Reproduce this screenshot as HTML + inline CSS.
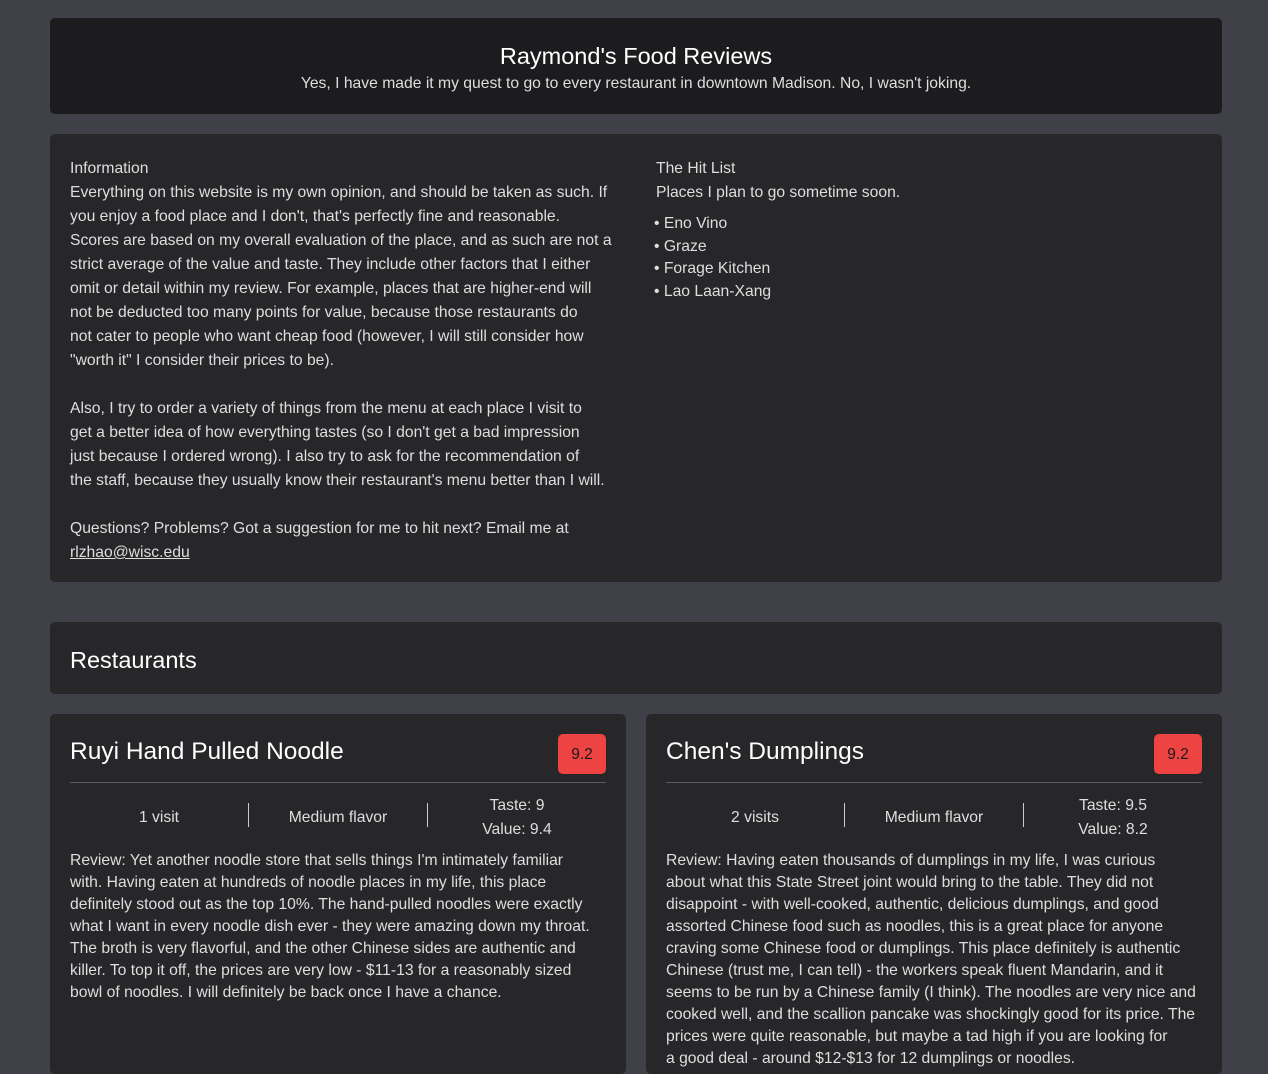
<!DOCTYPE html>
<html><head><style>
body{margin:0;background:#404148;font-family:"Liberation Sans",sans-serif;color:#dedede;width:1268px;height:1053px;overflow:hidden;position:relative}
.box{position:absolute;border-radius:5px;background:#27272a}
.t{position:absolute;font-size:15.7px;line-height:24px;white-space:nowrap}
.card .title{position:absolute;left:20px;top:24px;font-size:24.5px;color:#fff}
.badge{position:absolute;right:20px;top:20px;width:48px;height:40px;background:#ee4343;border-radius:5px;color:#1a1a1a;font-size:15.5px;text-align:center;line-height:42px}
.hr{position:absolute;left:20px;right:20px;top:68px;height:1px;background:#5a5a62}
.stat{position:absolute;top:80px;height:48px;width:178px;text-align:center;font-size:15.7px}
.sep{position:absolute;top:89px;width:1px;height:24px;background:#ccc}
.rev{position:absolute;left:20px;top:136px;font-size:15.7px;line-height:22px;white-space:nowrap}
</style></head><body>
<div class="box" style="left:50px;top:18px;width:1172px;height:96px;background:#1c1c1f">
<div style="position:absolute;top:25px;width:100%;text-align:center;font-size:23.5px;color:#fff">Raymond's Food Reviews</div>
<div style="position:absolute;top:57px;width:100%;text-align:center;font-size:15.7px">Yes, I have made it my quest to go to every restaurant in downtown Madison. No, I wasn't joking.</div>
</div>
<div class="box" style="left:50px;top:134px;width:1172px;height:448px">
<div class="t" style="left:20px;top:23px">Information<br>Everything on this website is my own opinion, and should be taken as such. If<br>you enjoy a food place and I don't, that's perfectly fine and reasonable.<br>Scores are based on my overall evaluation of the place, and as such are not a<br>strict average of the value and taste. They include other factors that I either<br>omit or detail within my review. For example, places that are higher-end will<br>not be deducted too many points for value, because those restaurants do<br>not cater to people who want cheap food (however, I will still consider how<br>"worth it" I consider their prices to be).<br><br>Also, I try to order a variety of things from the menu at each place I visit to<br>get a better idea of how everything tastes (so I don't get a bad impression<br>just because I ordered wrong). I also try to ask for the recommendation of<br>the staff, because they usually know their restaurant's menu better than I will.<br><br>Questions? Problems? Got a suggestion for me to hit next? Email me at<br><u>rlzhao@wisc.edu</u></div>
<div class="t" style="left:606px;top:23px">The Hit List<br>Places I plan to go sometime soon.</div>
<div class="t" style="left:604px;top:79px;line-height:22.5px">• Eno Vino<br>• Graze<br>• Forage Kitchen<br>• Lao Laan-Xang</div>
</div>
<div class="box" style="left:50px;top:622px;width:1172px;height:72px">
<div style="position:absolute;left:20px;top:25px;font-size:23.5px;color:#fff">Restaurants</div>
</div>
<div class="box card" style="left:50px;top:714px;width:576px;height:360px">
<div class="title">Ruyi Hand Pulled Noodle</div><div class="badge">9.2</div><div class="hr"></div>
<div class="stat" style="left:20px;line-height:48px">1 visit</div><div class="sep" style="left:198px"></div>
<div class="stat" style="left:199px;line-height:48px">Medium flavor</div><div class="sep" style="left:377px"></div>
<div class="stat" style="left:378px;line-height:24px">Taste: 9<br>Value: 9.4</div>
<div class="rev">Review: Yet another noodle store that sells things I'm intimately familiar<br>with. Having eaten at hundreds of noodle places in my life, this place<br>definitely stood out as the top 10%. The hand-pulled noodles were exactly<br>what I want in every noodle dish ever - they were amazing down my throat.<br>The broth is very flavorful, and the other Chinese sides are authentic and<br>killer. To top it off, the prices are very low - $11-13 for a reasonably sized<br>bowl of noodles. I will definitely be back once I have a chance.</div>
</div>
<div class="box card" style="left:646px;top:714px;width:576px;height:360px">
<div class="title">Chen's Dumplings</div><div class="badge">9.2</div><div class="hr"></div>
<div class="stat" style="left:20px;line-height:48px">2 visits</div><div class="sep" style="left:198px"></div>
<div class="stat" style="left:199px;line-height:48px">Medium flavor</div><div class="sep" style="left:377px"></div>
<div class="stat" style="left:378px;line-height:24px">Taste: 9.5<br>Value: 8.2</div>
<div class="rev">Review: Having eaten thousands of dumplings in my life, I was curious<br>about what this State Street joint would bring to the table. They did not<br>disappoint - with well-cooked, authentic, delicious dumplings, and good<br>assorted Chinese food such as noodles, this is a great place for anyone<br>craving some Chinese food or dumplings. This place definitely is authentic<br>Chinese (trust me, I can tell) - the workers speak fluent Mandarin, and it<br>seems to be run by a Chinese family (I think). The noodles are very nice and<br>cooked well, and the scallion pancake was shockingly good for its price. The<br>prices were quite reasonable, but maybe a tad high if you are looking for<br>a good deal - around $12-$13 for 12 dumplings or noodles.</div>
</div>
</body></html>
